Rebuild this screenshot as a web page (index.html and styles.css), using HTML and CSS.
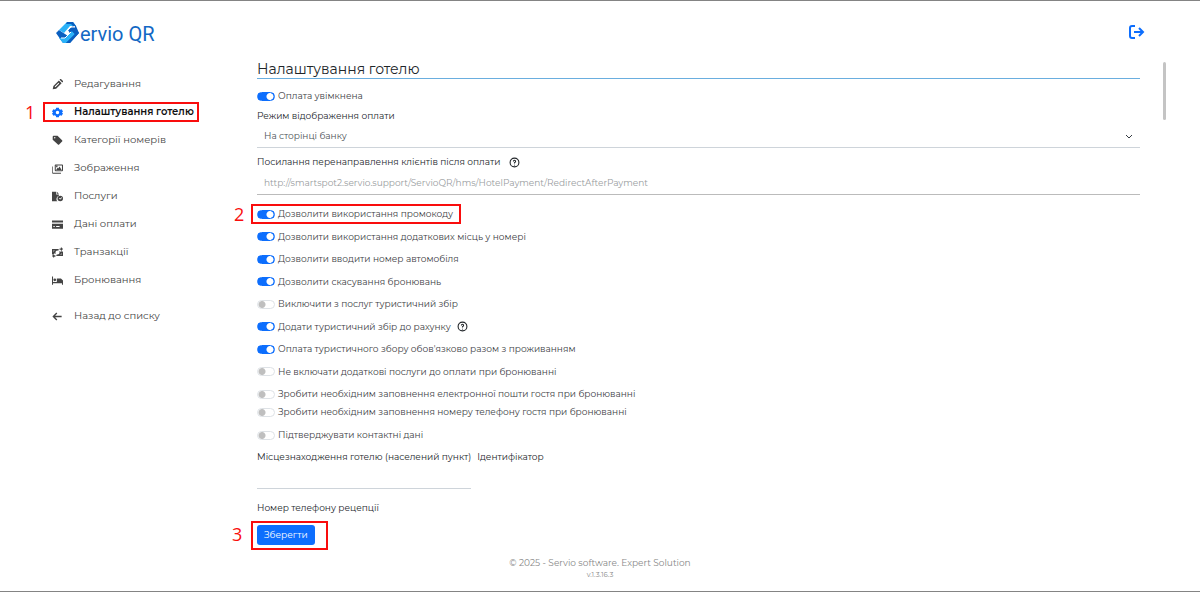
FILE: index.html
```html
<!DOCTYPE html>
<html lang="uk">
<head>
    <meta charset="UTF-8">
    <meta name="viewport" content="width=device-width, initial-scale=1.0">
    <title>Servio QR</title>
    <link rel="stylesheet" href="styles.css">
</head>
<body>

<header class="topbar">
    <a class="logo" href="#">
        <svg width="24" height="24" viewBox="0 0 24 24">
            <path fill="#0a5fc0" d="M0 12 3 9l9 6-5 7zM12 9l5-4 6 7-9 10H7l8-8z"/>
            <path fill="#2bb2f8" d="M3 9 11 1h6l3 4h-6l-6 7zM3 17h6l7-7 3 3-9 9H7z"/>
            <path fill="#0a5fc0" d="M11 1h6l3 4h-3l-2-2h-5zM16 10l3-5h1l3 7-9 10h-4l9-9z"/>
            <path fill="none" stroke="#fff" d="M19 6h-4l-6 6M5 17h4l6-6"/>
        </svg>
        <span>ervio QR</span>
    </a>
    <a class="logout" href="#" aria-label="Вийти">
        <svg width="16" height="14" viewBox="0 0 16 14" fill="none" stroke="#0d6efd" stroke-width="2">
            <path d="M6 1H3a2 2 0 0 0-2 2v8a2 2 0 0 0 2 2h3M5 7h9M10 3l4 4-4 4"/>
        </svg>
    </a>
</header>

<div class="layout">
    <nav class="sidebar">
        <a href="#">
            <svg viewBox="0 0 16 16"><path fill-rule="evenodd" d="M1 15l1-5 8-8 4 4-8 8zM4 11l1 1 5.500-5.500-1-1zM11 1l1-1h1l3 3v1l-1 1z"/></svg>
            Редагування
        </a>
        <a class="active marked" href="#">
            <span class="step">1</span>
            <svg viewBox="0 0 16 16"><path fill-rule="evenodd" d="M6 1h4l.4 2 1.600.9 2-.7 2 3.400L14.400 8l1.600 1.400-2 3.400-2-.7-1.600.9-.4 2H6l-.4-2-1.600-.9-2 .7L0 9.400 1.600 8 0 6.600l2-3.400 2 .7L5.600 3zM8 5.500a2.500 2.500 0 1 0 0 5 2.500 2.500 0 0 0 0-5z"/></svg>
            Налаштування готелю
        </a>
        <a href="#">
            <svg viewBox="0 0 16 16"><path fill-rule="evenodd" d="M1 2l1-1h6l7 7v1l-5 5H9L1 7zM4 3a1 1 0 1 0 0 2 1 1 0 0 0 0-2z"/></svg>
            Категорії номерів
        </a>
        <a href="#">
            <svg viewBox="0 0 16 16"><path fill-rule="evenodd" d="M5 2h10l1 1v8l-1 1H5l-1-1V3zM5.500 3.500v7h9v-7zM1 5v9h12v1.500H1L0 14V5zM6 10l2-3 1 1 2-3 3 5zM6 4h2v2H6z"/></svg>
            Зображення
        </a>
        <a href="#">
            <svg viewBox="0 0 16 16"><path fill-rule="evenodd" d="M0 1h6v4h4v2a5 5 0 0 0-3 7l1 1H0zM7 1l3 3H7zM12 7a4 4 0 1 0 0 8 4 4 0 0 0 0-8zM10 11l1-1 1 1 2-2 .7.7L12 12.500z"/></svg>
            Послуги
        </a>
        <a href="#">
            <svg viewBox="0 0 16 16"><path fill-rule="evenodd" d="M0 2h16v3H0zM0 7h16v7H0zM2 10v1.500h2V10zM6 10v1.500h5V10z"/></svg>
            Дані оплати
        </a>
        <a href="#">
            <svg viewBox="0 0 16 16"><path fill-rule="evenodd" d="M0 3h10l-1 2 3 2 2-1 2 1v6H6l1-2-3-2-2 2H0zM8 5a3 3 0 1 0 0 6 3 3 0 0 0 0-6zM2 5v2l2-2zM14 11v-2l-2 2z"/><path d="M11 2h2V0l3 3-3 3V4h-2zM5 12H3v-2l-3 3 3 3v-2h2z"/></svg>
            Транзакції
        </a>
        <a href="#">
            <svg viewBox="0 0 16 16"><path d="M0 2h1.500v8H7V5h6l3 3v6h-1.500v-2h-13v2H0z"/><circle cx="4" cy="7" r="2"/></svg>
            Бронювання
        </a>
        <a class="back" href="#">
            <svg viewBox="0 0 16 16"><path d="M14 8H3M7 3 2 8l5 5" fill="none" stroke="currentColor" stroke-width="2"/></svg>
            Назад до списку
        </a>
    </nav>

    <main class="content">
        <h1>Налаштування готелю</h1>
        <form class="settings">
            <label class="switch"><input type="checkbox" checked>Оплата увімкнена</label>

            <label class="caption" for="mode">Режим відображення оплати</label>
            <div class="select-wrap">
                <select id="mode">
                    <option>На сторінці банку</option>
                </select>
                <svg width="8" height="6" viewBox="0 0 8 6" fill="none" stroke="#343a40" stroke-width="1"><path d="M1 1l3 3 3-3"/></svg>
            </div>

            <label class="caption" for="redirect">Посилання перенаправлення клієнтів після оплати
                <svg class="help" viewBox="0 0 10 10"><circle cx="5" cy="5" r="4"/><path d="M4 4q0-1 1-1t1 1q0 .5-1 1.200V6M5 7v.7"/></svg>
            </label>
            <input class="field" id="redirect" type="text" placeholder="http://smartspot2.servio.support/ServioQR/hms/HotelPayment/RedirectAfterPayment">

            <div class="switch-list">
                <label class="switch marked"><span class="step">2</span><input type="checkbox" checked>Дозволити використання промокоду</label>
                <label class="switch"><input type="checkbox" checked>Дозволити використання додаткових місць у номері</label>
                <label class="switch"><input type="checkbox" checked>Дозволити вводити номер автомобіля</label>
                <label class="switch"><input type="checkbox" checked>Дозволити скасування бронювань</label>
                <label class="switch"><input type="checkbox">Виключити з послуг туристичний збір</label>
                <label class="switch"><input type="checkbox" checked>Додати туристичний збір до рахунку
                    <svg class="help" viewBox="0 0 10 10"><circle cx="5" cy="5" r="4"/><path d="M4 4q0-1 1-1t1 1q0 .5-1 1.200V6M5 7v.7"/></svg>
                </label>
                <label class="switch"><input type="checkbox" checked>Оплата туристичного збору обов'язково разом з проживанням</label>
                <label class="switch"><input type="checkbox">Не включати додаткові послуги до оплати при бронюванні</label>
                <label class="switch"><input type="checkbox">Зробити необхідним заповнення електронної пошти гостя при бронюванні</label>
            </div>
            <label class="switch"><input type="checkbox">Зробити необхідним заповнення номеру телефону гостя при бронюванні</label>
            <label class="switch confirm"><input type="checkbox">Підтверджувати контактні дані</label>

            <div class="location">
                <div>
                    <label class="caption" for="city">Місцезнаходження готелю (населений пункт)</label>
                    <input class="field" id="city" type="text">
                </div>
                <span class="caption">Ідентифікатор</span>
            </div>
            <span class="caption phone">Номер телефону рецепції</span>
        </form>
        <div class="actions marked">
            <span class="step">3</span>
            <button type="button">Зберегти</button>
        </div>
        <div class="scroll-thumb"></div>
    </main>
</div>

<footer>
    <p>© 2025 - Servio software. Expert Solution</p>
    <small>v.1.3.16.3</small>
</footer>

</body>
</html>
```

FILE: styles.css
```css
* {
    box-sizing: border-box;
}

body {
    margin: 0;
    min-height: 100vh;
    display: flex;
    flex-direction: column;
    border-top: 1px solid #848484;
    border-bottom: 1px solid #848484;
    background-color: #fff;
    color: #212529;
    font-family: Montserrat, Inter, sans-serif;
    font-size: 9px;
    line-height: 18px;
}

a {
    color: inherit;
    text-decoration: none;
}

.topbar {
    display: flex;
    justify-content: space-between;
    padding: 20px 55px 0 56px;
    height: 59px;
}

.logo {
    display: flex;
    color: #1268c4;
    font-family: Roboto, sans-serif;
    font-size: 20px;
    line-height: 26px;
}

.logout {
    padding-top: 4px;
}

.layout {
    display: flex;
    flex: 1;
}

.sidebar {
    width: 257px;
    padding: 10px 0 0 52px;
}

.sidebar a {
    position: relative;
    display: flex;
    align-items: center;
    gap: 11px;
    width: 140px;
    height: 28px;
    color: #444;
    font-size: 10px;
    white-space: nowrap;
}

.sidebar svg {
    flex-shrink: 0;
    width: 11px;
    height: 11px;
    fill: currentColor;
}

.sidebar .active {
    color: #111;
    font-weight: 600;
}

.sidebar .active svg {
    fill: #0d6efd;
}

.sidebar .back {
    margin-top: 8px;
}

/* Red frames with step numbers */
.marked {
    position: relative;
}

.marked::after {
    content: "";
    position: absolute;
    inset: -1px -8px -1px -6px;
    border: 2px solid #f90d0d;
}

.sidebar .marked::after {
    inset: 4px -7px 4px -9px;
}

.step {
    position: absolute;
    left: -23px;
    color: #f90d0d;
    font-family: "Open Sans", sans-serif;
    font-size: 18px;
    font-weight: 400;
}

.sidebar .step {
    left: -27px;
}

.content {
    position: relative;
    flex: 1;
    padding-right: 60px;
}

h1 {
    margin: 0;
    border-bottom: 1px solid #6aaedf;
    font-size: 14px;
    font-weight: 400;
    line-height: 18px;
}

.settings {
    padding-top: 8px;
}

.switch {
    display: flex;
    align-items: center;
    width: fit-content;
    height: 18px;
    color: #3c4044;
}

.switch input {
    appearance: none;
    width: 18px;
    height: 9px;
    margin: 0 3px 0 0;
    border: 1px solid #dee2e6;
    border-radius: 5px;
    background: radial-gradient(circle at 4px 50%, #bfbfbf 3px, transparent 4px);
}

.switch input:checked {
    border-color: #0d6efd;
    background: radial-gradient(circle at 12px 50%, #fff 3px, #0d6efd 4px);
}

.caption {
    display: block;
    margin-top: 2px;
}

.help {
    width: 11px;
    height: 11px;
    margin-left: 6px;
    vertical-align: middle;
    fill: none;
    stroke: #212529;
}

.select-wrap {
    position: relative;
}

.select-wrap svg {
    position: absolute;
    top: 9px;
    right: 7px;
}

select,
.field {
    appearance: none;
    display: block;
    width: 100%;
    height: 23px;
    padding: 0 7px;
    border: 0;
    border-bottom: 1px solid #ced4da;
    border-radius: 0;
    background: transparent;
    color: #4c5156;
    font: inherit;
}

.field::placeholder {
    color: #999da0;
}

#redirect {
    height: 24px;
    border-color: #bbb;
}

.caption[for="redirect"] {
    margin-top: 5px;
}

.switch-list {
    display: flex;
    flex-direction: column;
    justify-content: space-between;
    min-height: 198px;
    margin-top: 10px;
}

.confirm {
    margin-top: 5px;
}

.location {
    display: flex;
    gap: 6px;
    margin-top: 2px;
}

.phone {
    margin-top: 10px;
}

.actions {
    width: fit-content;
    margin-top: 8px;
}

.actions.marked::after {
    inset: -4px -13px -5px -6px;
}

.actions .step {
    left: -25px;
}

button {
    display: block;
    height: 20px;
    padding: 0 7px;
    border: 0;
    border-radius: 3px;
    background-color: #0d6efd;
    color: #fff;
    font: inherit;
}

.scroll-thumb {
    position: absolute;
    top: 2px;
    right: 34px;
    width: 3px;
    height: 58px;
    border-radius: 2px;
    background-color: #c4c4c4;
}

footer {
    padding-bottom: 10px;
    color: #888;
    line-height: 12px;
    text-align: center;
}

footer p {
    margin: 0;
}

footer small {
    display: block;
    font-size: 7px;
}
```
